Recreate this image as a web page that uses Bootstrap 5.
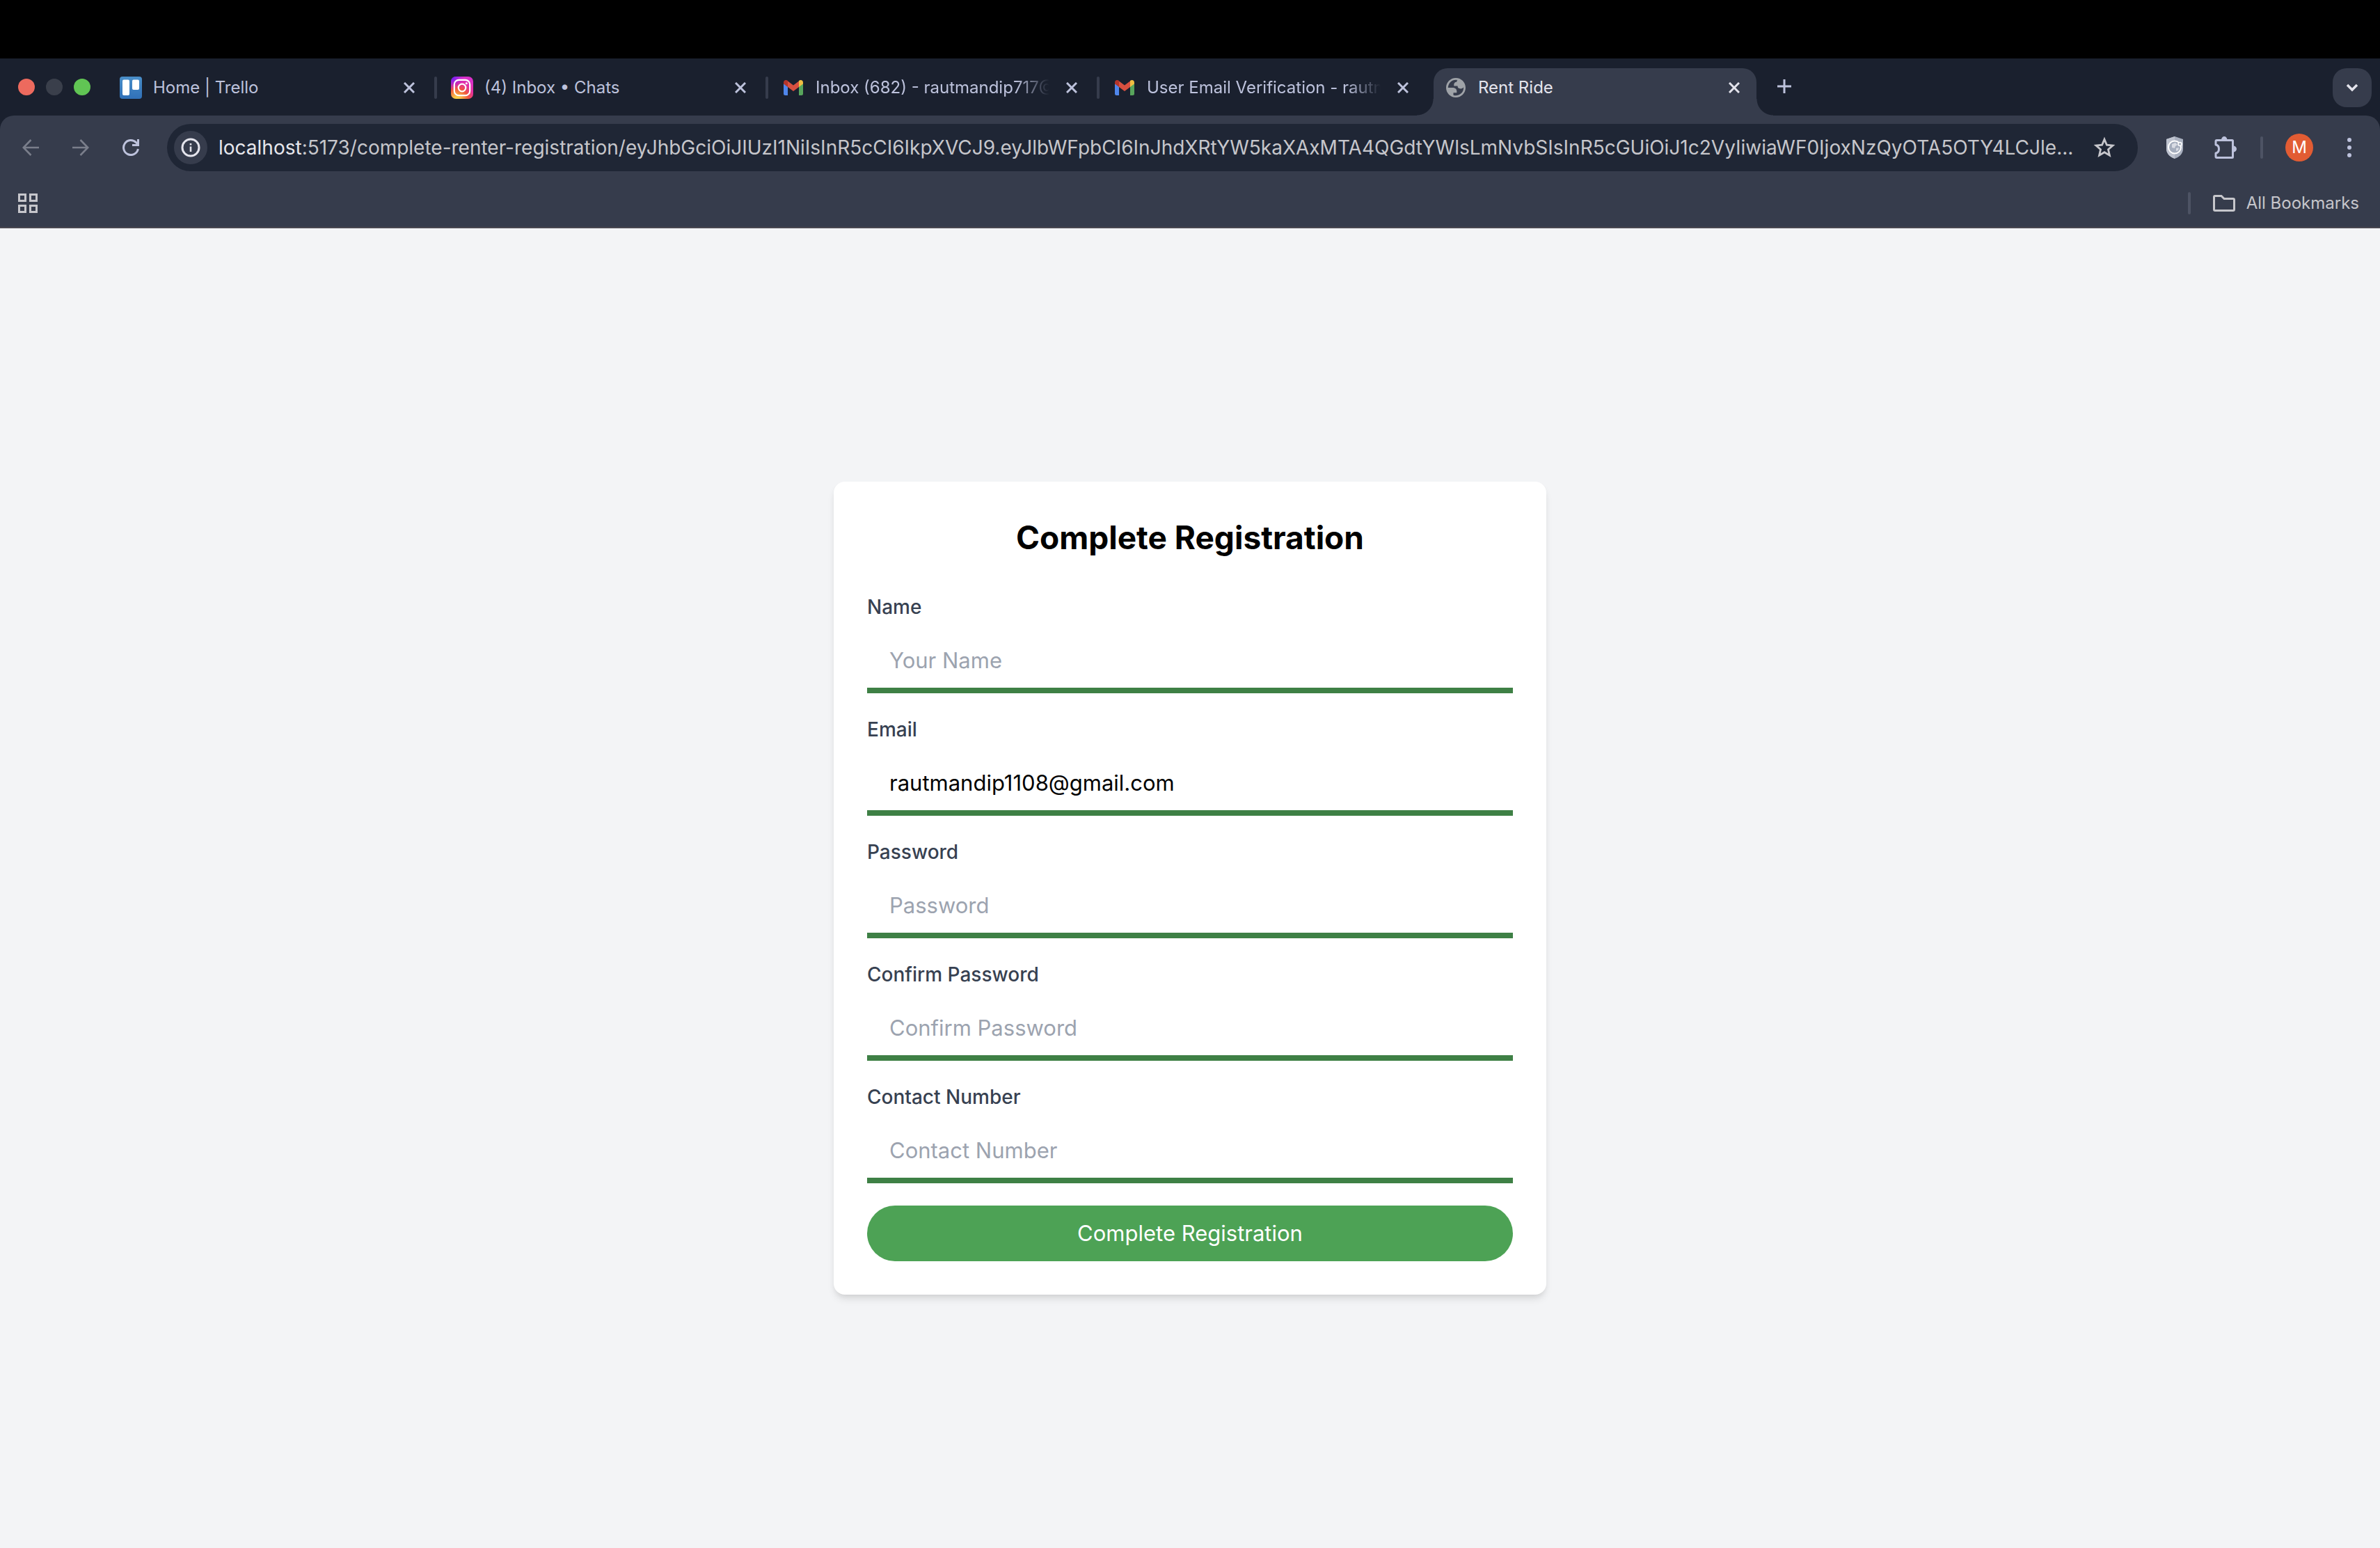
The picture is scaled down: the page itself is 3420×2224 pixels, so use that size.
<!DOCTYPE html>
<html lang="en">
<head>
<meta charset="utf-8">
<meta name="viewport" content="width=device-width, initial-scale=1">
<title>Rent Ride</title>
<link rel="stylesheet" href="https://cdn.jsdelivr.net/npm/bootstrap@5.3.0/dist/css/bootstrap.min.css">
<style>
  body { font-family: Inter, "Liberation Sans", sans-serif; font-size: 24px; line-height: 32px; background: #f3f4f6; }
  svg { display: block; flex: none; }
  .icon-btn { display: flex; align-items: center; justify-content: center; flex: none; padding: 0; border: 0; background: none; color: inherit; }

  .menu-strip { height: 84px; background: #000; }
  .tab-strip { height: 82px; padding: 14px 12px 0 26px; background: #1a202e; color: #bdc2dc; }
  .lights { gap: 16px; height: 54px; margin-right: 26px; }
  .light { width: 24px; height: 24px; border-radius: 50%; background: #3a3f4b; }
  .light-red { background: #ed6a5e; }
  .light-green { background: #61c554; }
  .tab-item { width: 476px; height: 68px; padding: 0 36px 12px 16px; }
  .tab-item .fav { width: 32px; height: 32px; margin-right: 16px; }
  .tab-title { min-width: 0; margin-right: 24px; white-space: nowrap; overflow: hidden; color: inherit; text-decoration: none; }
  .fade-end { -webkit-mask-image: linear-gradient(to left, transparent, #000 48px); mask-image: linear-gradient(to left, transparent, #000 48px); }
  .tab-sep { width: 4px; height: 32px; margin: 12px 4px 0 -8px; border-radius: 2px; background: #363c4c; }
  .tab-current { position: relative; width: 464px; padding-right: 24px; border-radius: 20px 20px 0 0; background: #363c4c; color: #e4e4ec; }
  .tab-current::before, .tab-current::after { content: ""; position: absolute; bottom: 0; width: 24px; height: 24px; }
  .tab-current::before { right: 100%; background: radial-gradient(circle at 0 0, transparent 23px, #363c4c 24px); }
  .tab-current::after { left: 100%; background: radial-gradient(circle at 100% 0, transparent 23px, #363c4c 24px); }
  .new-tab { width: 52px; height: 52px; margin-left: 14px; }
  .tab-search { width: 56px; height: 56px; border-radius: 20px; background: #363c4c; color: #e4e4ec; }

  .corner-back { background: #1a202e; }
  .toolbar-area { border-radius: 20px 20px 0 0; background: #363c4c; color: #bdc2dc; border-bottom: 2px solid #4a4850; }
  .tool-row { height: 92px; padding: 0 40px 0 24px; }
  .nav-btn { width: 40px; height: 40px; margin-right: 32px; }
  .nav-off { color: #7a7e8b; }
  .omnibox { height: 68px; min-width: 0; margin-right: 40px; padding: 0 32px 0 10px; border-radius: 34px; background: #1f2635; font-size: 28px; color: #c6c6cb; }
  .site-info { width: 48px; height: 48px; margin-right: 16px; border-radius: 50%; background: #363c4c; color: #e4e4ec; }
  .url-text { min-width: 0; white-space: nowrap; overflow: hidden; }
  .url-host { color: #e6e6ec; }
  .puzzle-btn { margin: 0 34px 0 44px; }
  .bar-sep { width: 4px; height: 32px; border-radius: 2px; background: #4d5364; }
  .avatar { width: 40px; height: 40px; margin: 0 48px 0 32px; border-radius: 50%; background: #e25c33; color: #fff; font-size: 24px; }
  .mark-row { height: 68px; padding: 0 30px 0 24px; color: #c6c6cb; }
  .mark-row a { color: inherit; text-decoration: none; }

  .form-card { width: 100%; max-width: 1024px; padding: 48px; border: 0; border-radius: 16px; box-shadow: 0 8px 12px -2px rgba(0,0,0,.1), 0 4px 8px -4px rgba(0,0,0,.1); }
  .form-card h1 { font-size: 46px; line-height: 64px; font-weight: 700; margin: 0 0 48px; color: #000; text-align: center; }
  .form-card .form-label { display: block; font-size: 28px; line-height: 40px; font-weight: 500; color: #374151; margin: 0 0 16px; }
  .form-card .form-control { height: 88px; padding: 16px 32px; border: 0; border-bottom: 8px solid #3e8045; border-radius: 0; background: #fff; font-size: 31px; line-height: 48px; color: #000; box-shadow: none; }
  .form-card .form-control::placeholder { color: #9ca3af; opacity: 1; }
  .field { margin-bottom: 32px; }
  .submit-btn { height: 80px; padding: 0; border: 0; font-size: 31px; line-height: 48px; color: #fff; background: #4da255; }
  .submit-btn:hover { color: #fff; background: #3e8045; }
</style>
</head>
<body class="d-flex flex-column min-vh-100">
<svg width="0" height="0" class="position-absolute" aria-hidden="true">
  <defs>
    <symbol id="x" viewBox="0 0 16 16"><path d="M1 1l14 14M15 1L1 15" stroke="currentColor" stroke-width="3" fill="none"/></symbol>
    <symbol id="gmail" viewBox="0 0 32 32">
      <path d="M2 10v14.500Q2 27 4.500 27H8V14z" fill="#4f86ec"/>
      <path d="M24 14v13h3.500q2.500 0 2.500-2.500V10z" fill="#58a55c"/>
      <path d="M24 7v8l6-4.500V8.500C30 5 26.500 4 24 6z" fill="#f1be42"/>
      <path d="M8 6.500l8 6 8-6V15l-8 6-8-6z" fill="#d85040"/>
      <path d="M2 8.500v2L8 15V6C5.500 4 2 5 2 8.500z" fill="#b3342a"/>
    </symbol>
    <linearGradient id="tr" x1="0" y1="0" x2="0" y2="1"><stop offset="0" stop-color="#4a8fc9"/><stop offset="1" stop-color="#3070b8"/></linearGradient>
    <radialGradient id="ig" cx=".27" cy="1.070" r="1.050"><stop offset="0" stop-color="#fdd754"/><stop offset=".15" stop-color="#fbc946"/><stop offset=".5" stop-color="#f0563f"/><stop offset=".75" stop-color="#e32fa0"/><stop offset="1" stop-color="#d930c8"/></radialGradient>
    <radialGradient id="ig2" cx="0" cy="0" r=".6"><stop offset="0" stop-color="#4a1cff"/><stop offset="1" stop-color="#a01cff" stop-opacity="0"/></radialGradient>
  </defs>
</svg>

<div class="menu-strip"></div>

<header>
  <div class="tab-strip d-flex align-items-start">
    <div class="lights d-flex align-items-center">
      <span class="light light-red"></span><span class="light"></span><span class="light light-green"></span>
    </div>
    <div class="tab-item d-flex align-items-center">
      <svg class="fav" viewBox="0 0 32 32"><rect width="32" height="32" rx="4" fill="url(#tr)"/><rect x="4" y="4.500" width="10" height="22.500" rx="2" fill="#fff"/><rect x="18" y="4.500" width="10" height="14.500" rx="2" fill="#fff"/></svg>
      <a href="#" class="tab-title flex-grow-1">Home | Trello</a>
      <button class="icon-btn" aria-label="Close tab"><svg width="16" height="16"><use href="#x"/></svg></button>
    </div>
    <span class="tab-sep"></span>
    <div class="tab-item d-flex align-items-center">
      <svg class="fav" viewBox="0 0 32 32"><rect width="32" height="32" rx="7" fill="url(#ig)"/><rect width="32" height="32" rx="7" fill="url(#ig2)"/><g fill="none" stroke="#fff" stroke-width="2.200"><rect x="4.800" y="4.800" width="22.400" height="22.400" rx="6.500"/><circle cx="16" cy="16" r="5.300"/></g><circle cx="22.300" cy="9.700" r="1.500" fill="#fff"/></svg>
      <a href="#" class="tab-title flex-grow-1">(4) Inbox • Chats</a>
      <button class="icon-btn" aria-label="Close tab"><svg width="16" height="16"><use href="#x"/></svg></button>
    </div>
    <span class="tab-sep"></span>
    <div class="tab-item d-flex align-items-center">
      <svg class="fav"><use href="#gmail"/></svg>
      <a href="#" class="tab-title fade-end flex-grow-1">Inbox (682) - rautmandip717@</a>
      <button class="icon-btn" aria-label="Close tab"><svg width="16" height="16"><use href="#x"/></svg></button>
    </div>
    <span class="tab-sep"></span>
    <div class="tab-item d-flex align-items-center">
      <svg class="fav"><use href="#gmail"/></svg>
      <a href="#" class="tab-title fade-end flex-grow-1">User Email Verification - rautm</a>
      <button class="icon-btn" aria-label="Close tab"><svg width="16" height="16"><use href="#x"/></svg></button>
    </div>
    <div class="tab-item tab-current d-flex align-items-center">
      <svg class="fav" viewBox="0.570 0.570 22.860 22.860"><path fill="#9fa3a8" fill-rule="evenodd" d="M12 2C6.480 2 2 6.480 2 12s4.480 10 10 10 10-4.480 10-10S17.520 2 12 2zM4 12h4.400c3.407.022 4.922 1.730 4.543 5.127H9.488v2.470a8.004 8.004 0 0 0 10.498-8.083C19.327 12.504 18.332 13 17 13c-2.137 0-3.206-.916-3.206-2.750h-3.748c-.274-2.728.683-4.092 2.870-4.092 0-.975.327-1.597.811-1.970A8.004 8.004 0 0 0 4 12z"/></svg>
      <a href="#" class="tab-title flex-grow-1">Rent Ride</a>
      <button class="icon-btn" aria-label="Close tab"><svg width="16" height="16"><use href="#x"/></svg></button>
    </div>
    <button class="icon-btn new-tab" aria-label="New tab"><svg width="20" height="20" viewBox="0 0 20 20"><path d="M10 0v20M0 10h20" stroke="currentColor" stroke-width="3"/></svg></button>
    <button class="icon-btn tab-search ms-auto" aria-label="Search tabs"><svg width="18" height="12" viewBox="0 0 18 12"><path d="M2 2l7 7 7-7" fill="none" stroke="currentColor" stroke-width="3.500"/></svg></button>
  </div>

  <div class="corner-back"><div class="toolbar-area">
    <div class="tool-row d-flex align-items-center">
      <button class="icon-btn nav-btn nav-off" aria-label="Back"><svg width="24" height="24" viewBox="0 0 24 24"><path d="M24 12H2M12.500 1L1.800 12l10.700 11" fill="none" stroke="currentColor" stroke-width="2.600"/></svg></button>
      <button class="icon-btn nav-btn nav-off" aria-label="Forward"><svg width="24" height="24" viewBox="0 0 24 24"><path d="M0 12h22M11.500 1l10.700 11-10.700 11" fill="none" stroke="currentColor" stroke-width="2.600"/></svg></button>
      <button class="icon-btn nav-btn" aria-label="Reload"><svg width="24" height="24" viewBox="0 0 24 24"><path d="M22.400 14A10.500 10.500 0 1 1 19.500 4.600l3 3.400M22.500 0v8.500H14" fill="none" stroke="currentColor" stroke-width="3"/></svg></button>
      <div class="omnibox d-flex align-items-center flex-grow-1">
        <button class="icon-btn site-info" aria-label="Site information"><svg width="28" height="28" viewBox="0 0 28 28"><circle cx="14" cy="14" r="12" fill="none" stroke="currentColor" stroke-width="3"/><path d="M14 12.500V20M14 8v2.600" stroke="currentColor" stroke-width="2.600"/></svg></button>
        <div class="url-text flex-grow-1"><span class="url-host">localhost</span>:5173/complete-renter-registration/eyJhbGciOiJIUzI1NiIsInR5cCI6IkpXVCJ9.eyJlbWFpbCI6InJhdXRtYW5kaXAxMTA4QGdtYWlsLmNvbSIsInR5cGUiOiJ1c2VyIiwiaWF0IjoxNzQyOTA5OTY4LCJle...</div>
        <button class="icon-btn" aria-label="Bookmark this page"><svg width="32" height="32" viewBox="0 0 32 32"><path d="M16 4.200l3.400 8 8.600.8-6.500 5.700 1.900 8.500-7.400-4.500-7.400 4.500 1.900-8.500L4 13l8.600-.8z" fill="none" stroke="currentColor" stroke-width="2.800"/></svg></button>
      </div>
      <button class="icon-btn" aria-label="Privacy extension"><svg width="26" height="32" viewBox="0 0 26 32"><path d="M13 0l12 4v14c0 7-6 12-12 14C7 30 1 25 1 18V4z" fill="#a9b0bf"/><path d="M13 0L1 4v14c0 7 6 12 12 14z" fill="#bec3cf"/><circle cx="13" cy="15.500" r="9" fill="#a5adbd" stroke="#fff" stroke-width="2"/><path d="M9 11l5-2 3 3-3 2-1 3-4-1zM15 17l4-1-1 4-3 1z" fill="#d9dce4"/><circle cx="20.500" cy="11" r="2.500" fill="#a9b0bf" stroke="#fff" stroke-width="1.500"/></svg></button>
      <button class="icon-btn puzzle-btn" aria-label="Extensions"><svg width="32" height="32" viewBox="0 0 32 32"><path d="M3.500 5.500h22q1 0 1 1v23q0 1-1 1h-22q-1.500 0-1.500-1.500V24c6-1 6-11 0-12V7q0-1.500 1.500-1.500z" fill="none" stroke="currentColor" stroke-width="3" stroke-linejoin="round"/><path d="M10 5a4.200 5 0 0 1 8.400 0zM27 13.500a5 4.500 0 0 1 0 9z" fill="currentColor"/></svg></button>
      <span class="bar-sep"></span>
      <button class="icon-btn avatar" aria-label="Profile">M</button>
      <button class="icon-btn" aria-label="Menu"><svg width="8" height="28" viewBox="0 0 8 28"><g fill="currentColor"><circle cx="4" cy="3" r="3"/><circle cx="4" cy="14" r="3"/><circle cx="4" cy="25" r="3"/></g></svg></button>
    </div>
    <div class="mark-row d-flex align-items-center">
      <button class="icon-btn" aria-label="Apps"><svg width="32" height="32" viewBox="0 0 32 32"><g fill="none" stroke="currentColor" stroke-width="3"><rect x="3.500" y="3.500" width="9" height="9"/><rect x="19.500" y="3.500" width="9" height="9"/><rect x="3.500" y="19.500" width="9" height="9"/><rect x="19.500" y="19.500" width="9" height="9"/></g></svg></button>
      <span class="bar-sep ms-auto me-4"></span>
      <a href="#" class="d-flex align-items-center gap-3 ms-2"><svg width="32" height="24" viewBox="0 0 32 24"><path d="M1.500 3q0-1.500 1.500-1.500h9l4 4h13q1.500 0 1.500 1.500v14q0 1.500-1.500 1.500H3q-1.500 0-1.500-1.500z" fill="none" stroke="currentColor" stroke-width="3"/></svg>All Bookmarks</a>
    </div>
  </div></div>
</header>

<main class="flex-grow-1 d-flex align-items-center justify-content-center">
  <form class="card form-card">
    <h1>Complete Registration</h1>
    <div class="field"><label class="form-label" for="name">Name</label><input class="form-control" id="name" type="text" placeholder="Your Name"></div>
    <div class="field"><label class="form-label" for="email">Email</label><input class="form-control" id="email" type="email" value="rautmandip1108@gmail.com"></div>
    <div class="field"><label class="form-label" for="password">Password</label><input class="form-control" id="password" type="password" placeholder="Password"></div>
    <div class="field"><label class="form-label" for="confirm">Confirm Password</label><input class="form-control" id="confirm" type="password" placeholder="Confirm Password"></div>
    <div class="field"><label class="form-label" for="contact">Contact Number</label><input class="form-control" id="contact" type="tel" placeholder="Contact Number"></div>
    <button type="submit" class="btn submit-btn rounded-pill w-100">Complete Registration</button>
  </form>
</main>
<script src="https://cdn.jsdelivr.net/npm/bootstrap@5.3.0/dist/js/bootstrap.bundle.min.js"></script>
</body>
</html>
